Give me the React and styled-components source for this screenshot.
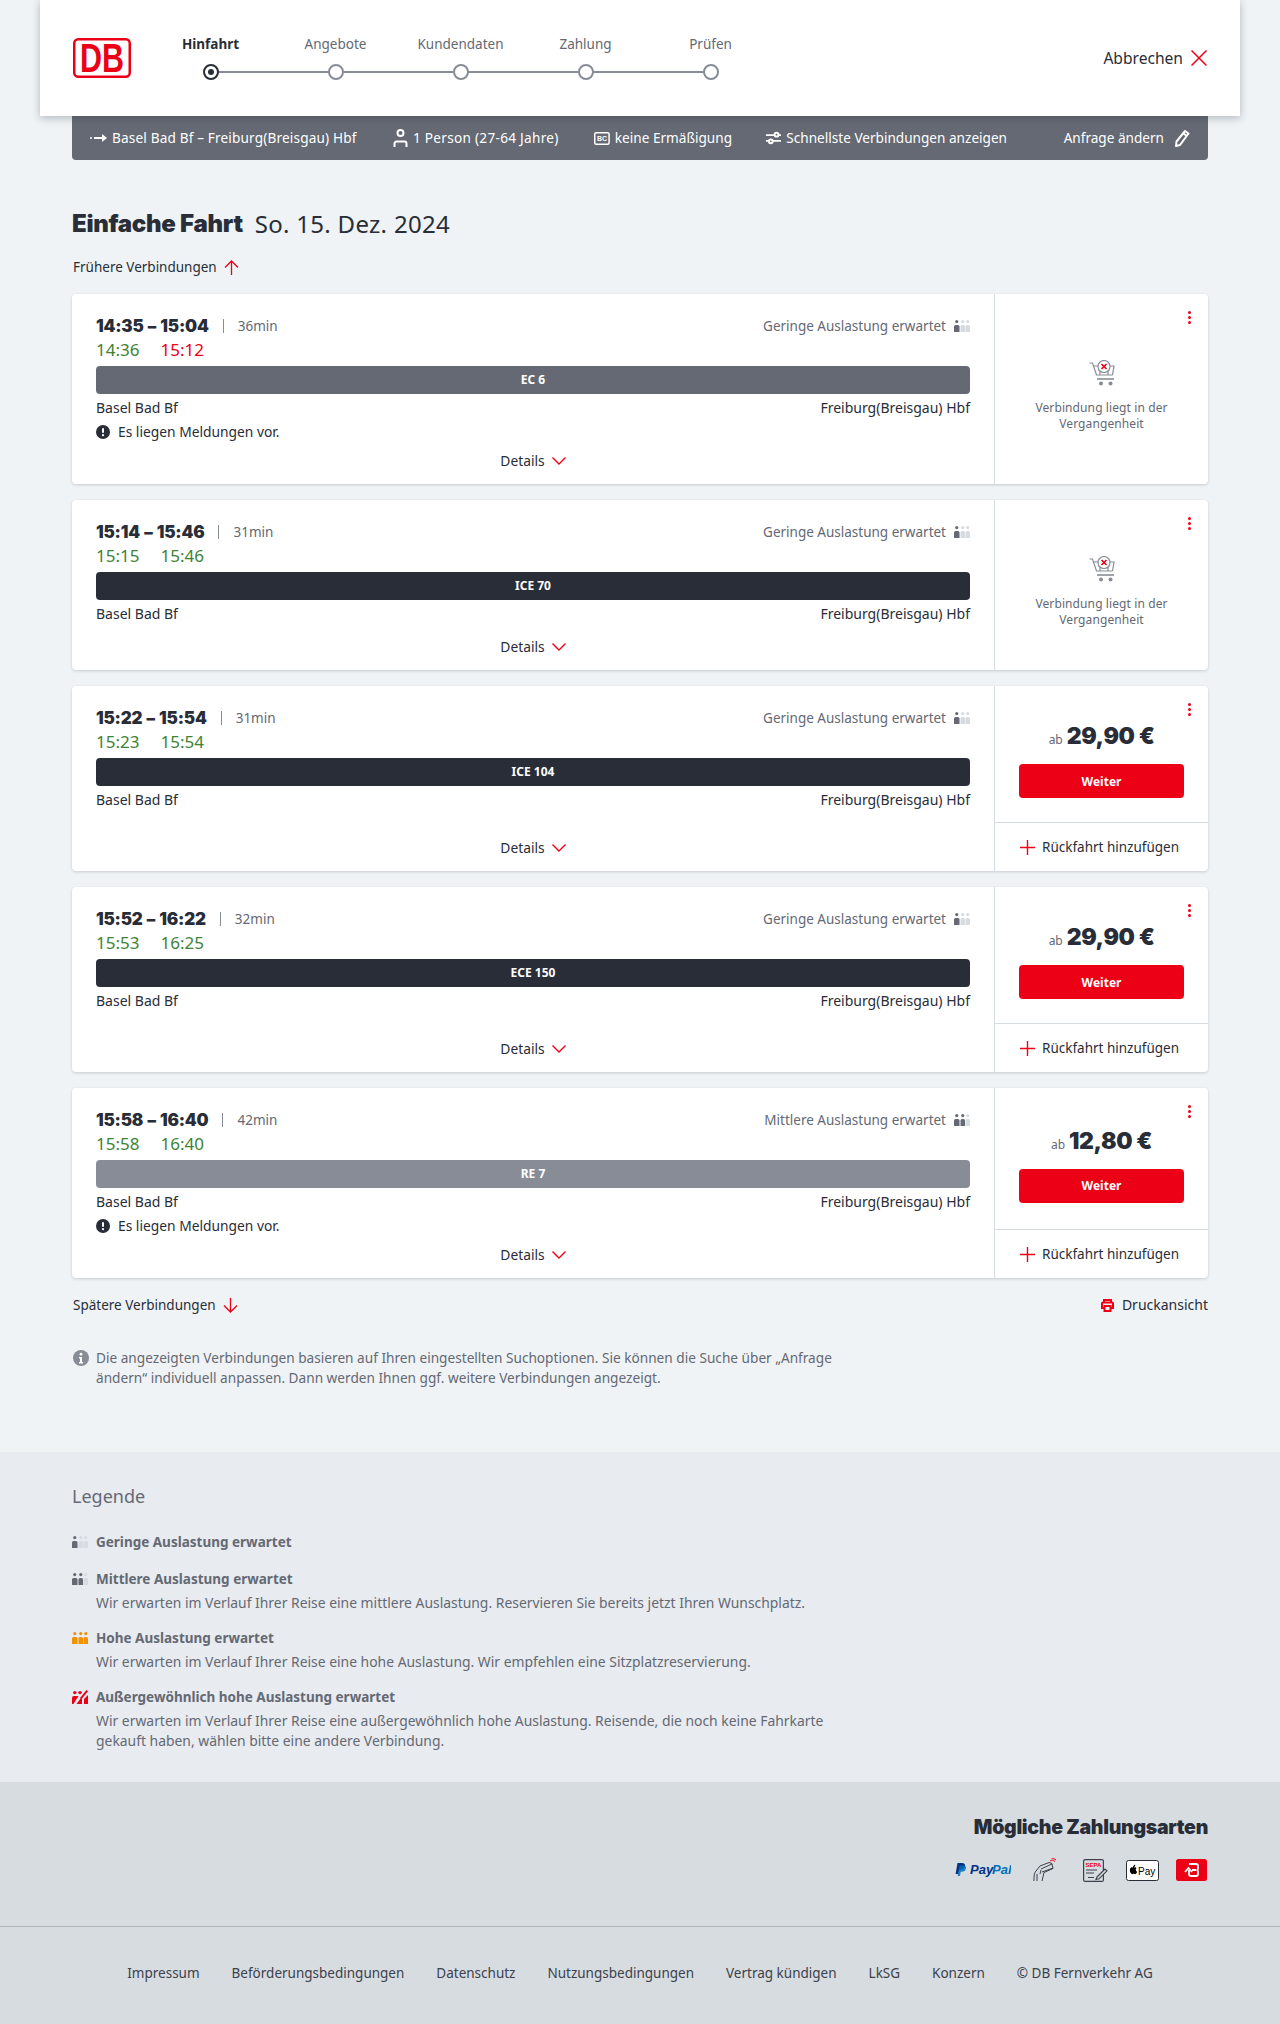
import React from "react";
import styled, { createGlobalStyle } from "styled-components";

const BODY_FONT = `"Noto Sans", "Open Sans", Arial, sans-serif`;
const HEAD_FONT = `Inter, "Noto Sans", Arial, sans-serif`;

const GlobalStyle = createGlobalStyle`
  * { box-sizing: border-box; }
  html, body { margin: 0; padding: 0; }
  body {
    background: #eff3f6;
    color: #282d37;
    font-family: ${BODY_FONT};
    font-size: 14px;
    line-height: 24px;
  }
`;

const Page = styled.div`
  width: 1280px;
  min-height: 2024px;
  display: flex;
  flex-direction: column;
`;

const Header = styled.header`
  position: relative;
  z-index: 2;
  margin: 0 40px;
  height: 116px;
  padding: 0 33px;
  background: #fff;
  box-shadow: 0 2px 8px rgba(40, 45, 55, 0.3);
  display: flex;
  align-items: center;
`;

const LogoBox = styled.svg`
  width: 58px;
  height: 40px;
  flex: none;
  overflow: visible;
`;

const Steps = styled.ol`
  list-style: none;
  margin: 32px 0 0 17px;
  padding: 0;
  display: flex;
  align-self: flex-start;
`;

const Step = styled.li`
  position: relative;
  width: 125px;
  display: flex;
  flex-direction: column;
  align-items: center;
  gap: 8px;
  font-size: 13.5px;
  color: ${p => (p.$active ? "#282d37" : "#646973")};
  font-weight: ${p => (p.$active ? 700 : 400)};
  &:not(:last-child)::after {
    content: "";
    position: absolute;
    left: 50%;
    width: 100%;
    bottom: 7px;
    height: 2px;
    background: #878c96;
  }
`;

const StepDot = styled.span`
  position: relative;
  z-index: 1;
  width: 16px;
  height: 16px;
  border-radius: 50%;
  background: #fff;
  border: 2px solid ${p => (p.$active ? "#282d37" : "#878c96")};
  display: flex;
  align-items: center;
  justify-content: center;
  &::before {
    content: "";
    width: 6px;
    height: 6px;
    border-radius: 50%;
    background: ${p => (p.$active ? "#282d37" : "transparent")};
  }
`;

const Cancel = styled.div`
  margin-left: auto;
  display: flex;
  align-items: center;
  gap: 8px;
  font-size: 15.6px;
`;

const SearchBar = styled.div`
  margin: 0 72px;
  height: 44px;
  padding: 0 18px;
  background: #646973;
  border-radius: 0 0 4px 4px;
  color: #fff;
  display: flex;
  align-items: center;
  font-size: 13.6px;
  gap: 34px;
`;

const BarItem = styled.span`
  width: ${p => p.$width}px;
  letter-spacing: ${p => p.$spacing || 0}px;
  display: flex;
  align-items: center;
  gap: 5px;
  white-space: nowrap;
`;

const BarEdit = styled.span`
  margin-left: auto;
  display: flex;
  align-items: center;
  gap: 10px;
  white-space: nowrap;
`;

const Main = styled.main`
  padding: 0 72px;
  display: flex;
  flex-direction: column;
`;

const Title = styled.h1`
  margin: 48px 0 0;
  font-size: 24px;
  line-height: 32px;
  font-weight: 400;
  letter-spacing: 0.3px;
  display: flex;
  gap: 12px;
`;

const TitleStrong = styled.strong`
  font-family: ${HEAD_FONT};
  font-weight: 900;
  letter-spacing: -0.3px;
`;

const MoreLink = styled.a`
  padding-left: 1px;
  display: flex;
  align-items: center;
  gap: 7px;
  font-size: 13.5px;
  color: #282d37;
`;

const EarlierRow = styled.div`
  margin: 15px 0;
`;

const CardList = styled.div`
  display: flex;
  flex-direction: column;
  gap: 16px;
`;

const Card = styled.article`
  position: relative;
  min-height: ${p => p.$height}px;
  display: grid;
  grid-template-columns: 923px 213px;
  background: #fff;
  border-radius: 4px;
  box-shadow: 0 1px 3px rgba(40, 45, 55, 0.2);
`;

const Left = styled.div`
  padding: 20px 24px 0;
  border-right: 1px solid #d7dce1;
  display: flex;
  flex-direction: column;
`;

const TimeRow = styled.div`
  display: flex;
  align-items: center;
  justify-content: space-between;
`;

const Planned = styled.div`
  display: flex;
  align-items: center;
`;

const PlannedTime = styled.span`
  font-family: ${HEAD_FONT};
  font-weight: 900;
  font-size: 17px;
  letter-spacing: -0.2px;
  word-spacing: 1px;
`;

const Duration = styled.span`
  margin-left: 14px;
  padding-left: 14px;
  border-left: 1px solid #878c96;
  line-height: 14px;
  color: #646973;
  font-size: 13.5px;
`;

const Load = styled.span`
  display: flex;
  align-items: center;
  gap: 8px;
  font-size: 13.5px;
  color: #646973;
`;

const Actual = styled.div`
  display: flex;
  gap: 21px;
  font-size: 17px;
`;

const ActualTime = styled.span`
  color: ${p => (p.$late ? "#ec0016" : "#408335")};
`;

const TrainBar = styled.div`
  margin-top: 4px;
  height: 28px;
  border-radius: 4px;
  background: ${p => p.$color};
  color: #fff;
  font-size: 12px;
  font-weight: 700;
  display: flex;
  align-items: center;
  justify-content: center;
`;

const Stations = styled.div`
  margin-top: 2px;
  display: flex;
  justify-content: space-between;
`;

const Notice = styled.div`
  display: flex;
  align-items: center;
  gap: 8px;
  font-size: 13.8px;
`;

const DetailsRow = styled.div`
  margin-top: auto;
  margin-bottom: 11px;
  display: flex;
  justify-content: center;
  align-items: center;
  gap: 7px;
  font-size: 13.8px;
`;

const Right = styled.div`
  display: flex;
  flex-direction: column;
`;

const Kebab = styled.span`
  position: absolute;
  top: 17px;
  right: 17px;
  width: 3px;
  height: 13px;
  display: flex;
  flex-direction: column;
  justify-content: space-between;
  i {
    display: block;
    width: 3px;
    height: 3px;
    border-radius: 50%;
    background: #ec0016;
  }
`;

const Past = styled.div`
  flex: 1;
  padding: 13px 26px 0;
  display: flex;
  flex-direction: column;
  align-items: center;
  justify-content: center;
  gap: 14px;
  color: #646973;
  font-size: 12px;
  line-height: 16px;
  letter-spacing: 0.1px;
  text-align: center;
`;

const Offer = styled.div`
  flex: 1;
  padding: 0 24px;
  display: flex;
  flex-direction: column;
  align-items: stretch;
  justify-content: center;
`;

const PriceRow = styled.div`
  height: 54px;
  display: flex;
  align-items: baseline;
  justify-content: center;
  gap: 4px;
  padding-top: 11px;
`;

const PriceFrom = styled.span`
  font-size: 12px;
  color: #646973;
`;

const Price = styled.span`
  font-family: ${HEAD_FONT};
  font-weight: 900;
  font-size: 23px;
  line-height: 30px;
  letter-spacing: -0.4px;
`;

const Continue = styled.button`
  height: 34px;
  border: 0;
  border-radius: 4px;
  background: #ec0016;
  color: #fff;
  font-family: ${BODY_FONT};
  font-size: 12px;
  font-weight: 700;
`;

const AddReturn = styled.div`
  height: 49px;
  padding-left: 25px;
  border-top: 1px solid #d7dce1;
  display: flex;
  align-items: center;
  gap: 7px;
  font-size: 13.5px;
`;

const BelowRow = styled.div`
  margin-top: 15px;
  display: flex;
  justify-content: space-between;
`;

const PrintLink = styled.span`
  display: flex;
  align-items: center;
  gap: 8px;
`;

const Info = styled.p`
  margin: 31px 0 0;
  width: 772px;
  display: flex;
  gap: 7px;
  padding-left: 1px;
  color: #646973;
  font-size: 13.65px;
  line-height: 20px;
  svg { flex: none; margin-top: 2px; }
`;

const Legend = styled.section`
  margin-top: 64px;
  height: 330px;
  padding: 32px 72px 0;
  background: #e8ebf0;
  color: #646973;
`;

const LegendTitle = styled.h2`
  margin: 0 0 22px;
  font-size: 18px;
  line-height: 24px;
  font-weight: 400;
`;

const LegendItem = styled.div`
  margin-bottom: 13px;
  width: 780px;
  display: grid;
  grid-template-columns: 24px 1fr;
  align-items: center;
`;

const LegendName = styled.strong`
  font-size: 13.5px;
  font-weight: 700;
`;

const LegendText = styled.p`
  grid-column: 2;
  margin: 2px 0 0;
  font-size: 13.9px;
  line-height: 20px;
`;

const Footer = styled.footer`
  flex: 1;
  background: #d7dce1;
  display: flex;
  flex-direction: column;
`;

const Payments = styled.div`
  height: 145px;
  padding: 30px 72px 0;
  border-bottom: 1px solid #afb4bb;
  display: flex;
  flex-direction: column;
  align-items: flex-end;
`;

const PaymentsTitle = styled.h3`
  margin: 0;
  font-family: ${HEAD_FONT};
  font-weight: 900;
  font-size: 19.5px;
  line-height: 30px;
  letter-spacing: -0.3px;
`;

const PaymentIcons = styled.div`
  margin-top: 16px;
  padding-right: 1px;
  display: flex;
  align-items: center;
`;

const PayItem = styled.span`
  display: flex;
  margin-right: ${p => p.$gap || 0}px;
`;

const FooterNav = styled.nav`
  flex: 1;
  padding-bottom: 6px;
  display: flex;
  align-items: center;
  justify-content: center;
  gap: 32px;
  font-size: 13.5px;
  color: #3c414b;
`;

const Logo = () => (
  <LogoBox viewBox="0 0 58 40">
    <rect x="1.25" y="1.25" width="55.5" height="37.5" rx="4" fill="#fff" stroke="#ec0016" strokeWidth="2.5" />
    <text x="29" y="34" textAnchor="middle" textLength="44" lengthAdjust="spacingAndGlyphs"
      fontFamily="Liberation Sans" fontWeight="700" fontSize="40" fill="#ec0016">DB</text>
  </LogoBox>
);

const RED = "#ec0016";

const ArrowUpIcon = () => (
  <svg width="15" height="15" viewBox="0 0 15 15" fill="none" stroke={RED} strokeWidth="1.3">
    <path d="M7.500 15V1M1 7.500l6.500-6.500 6.500 6.500" />
  </svg>
);

const ArrowDownIcon = () => (
  <svg width="15" height="15" viewBox="0 0 15 15" fill="none" stroke={RED} strokeWidth="1.3">
    <path d="M7.500 0v14M1 7.500l6.500 6.500 6.500-6.500" />
  </svg>
);

const CloseIcon = () => (
  <svg width="16" height="16" viewBox="0 0 16 16" fill="none" stroke={RED} strokeWidth="1.500">
    <path d="M.5.500l15 15M15.500.500l-15 15" />
  </svg>
);

const ChevronIcon = () => (
  <svg width="14" height="8" viewBox="0 0 14 8" fill="none" stroke={RED} strokeWidth="1.400">
    <path d="M.5.500L7 7l6.500-6.500" />
  </svg>
);

const PlusIcon = () => (
  <svg width="15" height="15" viewBox="0 0 15 15" fill="none" stroke={RED} strokeWidth="1.400">
    <path d="M7.500 0v15M0 7.500h15" />
  </svg>
);

const Occupancy = ({ level = 1, color = "#646973", size = 16 }) => (
  <svg width={size} height={size * 0.75} viewBox="0 0 16 12" style={{ flex: "none" }}>
    {[0, 1, 2].map(i => {
      const x = i === 0 ? 0 : i === 1 ? 6.5 : 11.5;
      const w = i === 0 ? 5.5 : 4.5;
      const fill = i < level ? color : "#d7dce1";
      return (
        <g key={i} fill={fill}>
          <circle cx={x + w / 2} cy="1.6" r="1.6" />
          <path d={`M${x} 12V6.5a1.5 1.5 0 0 1 1.5-1.5h${w - 3}a1.5 1.5 0 0 1 1.5 1.5V12z`} />
        </g>
      );
    })}
  </svg>
);

const OccupancyFull = () => (
  <svg width="16" height="14" viewBox="0 0 16 14" style={{ flex: "none" }}>
    <g fill="#ec0016">
      <circle cx="2.8" cy="2.6" r="1.7" />
      <circle cx="8" cy="2.6" r="1.7" />
      <path d="M0 14V8a2 2 0 0 1 2-2h4.500L1.500 14z" />
      <path d="M4.500 14l5.500-7.500V14z" />
      <path d="M12 14V9l4-4v9z" />
      <path d="M8 8L14.500 0l1.500 1.200L9.500 9.200z" />
    </g>
  </svg>
);

const RouteIcon = () => (
  <svg width="17" height="10" viewBox="0 0 17 10" fill="#fff">
    <circle cx="1" cy="5" r="1" />
    <rect x="4" y="4" width="9" height="2" />
    <path d="M12 1l5 4-5 4z" />
  </svg>
);

const PersonIcon = () => (
  <svg width="15" height="20" viewBox="0 0 15 20" fill="none" stroke="#fff" strokeWidth="2">
    <circle cx="7.500" cy="5" r="3" />
    <path d="M1.500 19v-3.500a2 2 0 0 1 2-2h8a2 2 0 0 1 2 2V19" />
  </svg>
);

const CardIcon = () => (
  <svg width="16" height="13" viewBox="0 0 16 13">
    <rect x="0.75" y="0.75" width="14.5" height="11.5" rx="1.5" fill="none" stroke="#fff" strokeWidth="1.5" />
    <text x="8" y="9.200" textAnchor="middle" fontFamily="Liberation Sans" fontWeight="700" fontSize="7" fill="#fff">BC</text>
  </svg>
);

const FilterIcon = () => (
  <svg width="16" height="14" viewBox="0 0 16 14" fill="none" stroke="#fff" strokeWidth="2">
    <path d="M0 4h16M0 10h16" />
    <circle cx="11" cy="3.5" r="2" fill="#646973" />
    <circle cx="5" cy="10.5" r="2" fill="#646973" />
  </svg>
);

const PencilIcon = () => (
  <svg width="16" height="18" viewBox="0 0 16 18" fill="none" stroke="#fff" strokeWidth="2" strokeLinejoin="round">
    <path d="M11 2l3.500 2.500L6 16l-4 1 .5-4.500z" />
    <path d="M9.500 4.500L13 7" />
  </svg>
);

const AlertIcon = () => (
  <svg width="14" height="14" viewBox="0 0 14 14" style={{ flex: "none" }}>
    <circle cx="7" cy="7" r="7" fill="#282d37" />
    <rect x="6" y="3" width="2" height="5" rx="1" fill="#fff" />
    <circle cx="7" cy="10.2" r="1.1" fill="#fff" />
  </svg>
);

const InfoIcon = () => (
  <svg width="16" height="16" viewBox="0 0 16 16">
    <circle cx="8" cy="8" r="8" fill="#878c96" />
    <circle cx="8" cy="4.2" r="1.4" fill="#fff" />
    <path d="M6 7h3v5h1v1.400H6V12h1V8.400H6z" fill="#fff" />
  </svg>
);

const CartIcon = () => (
  <svg width="26" height="26" viewBox="0 0 26 26" fill="none" stroke="#878c96" strokeWidth="1.2">
    <path d="M0.5 3h3l4 12h16" />
    <path d="M4.5 6h20.5l-1.5 9" />
    <path d="M8 19h17" strokeWidth="1.6" />
    <path d="M9 10h12M11 6v9M19 6v9" />
    <circle cx="12" cy="23.5" r="2" fill="#878c96" stroke="none" />
    <circle cx="21.5" cy="23.5" r="2" fill="#878c96" stroke="none" />
    <circle cx="15" cy="6.5" r="6" fill="#fff" />
    <path d="M12.500 4l5 5M17.500 4l-5 5" stroke="#ec0016" strokeWidth="1.6" />
  </svg>
);

const PrintIcon = () => (
  <svg width="13" height="13" viewBox="0 0 13 13" fill="none" stroke={RED} strokeWidth="2">
    <path d="M3 3.500V1h7v2.500" />
    <path d="M3 9H1V4.500a1 1 0 0 1 1-1h9a1 1 0 0 1 1 1V9h-2" />
    <rect x="3.500" y="7" width="6" height="5" />
  </svg>
);

const PayPal = () => (
  <svg width="56" height="16" viewBox="0 0 56 16">
    <path d="M2.500 1h4.500c2.400 0 3.400 1.300 3 3.300-.5 2.300-2 3.500-4.300 3.500H4.200L3.400 12H.6z" fill="#003087" />
    <path d="M4.500 3.500h3.900c2 0 2.900 1.100 2.500 3-.5 2.200-1.900 3.300-4 3.300H5.700L5 14H2.700z" fill="#0070ba" opacity="0.85" />
    <text x="15" y="12" fontFamily="Liberation Sans" fontWeight="700" fontStyle="italic" fontSize="13" fill="#003087">Pay</text>
    <text x="37" y="12" fontFamily="Liberation Sans" fontWeight="700" fontStyle="italic" fontSize="13" fill="#0070ba">Pal</text>
  </svg>
);

const CardHand = () => (
  <svg width="24" height="24" viewBox="0 0 24 24" fill="none" stroke="#3c414b" strokeWidth="1">
    <path d="M1 23c0-5 0-8 2-10l4-5 9-3.500 3 1 1 5-9 4-2 8.500" />
    <path d="M8 11l11-5M9 14l11-4" />
    <path d="M4 23v-7M7 16l1-4" />
    <path d="M17 3c1.500-1 3.500-1 5 .5M18.500.8c1.500-.4 3.500 0 4.500 1.200" stroke="#ec0016" />
  </svg>
);

const Sepa = () => (
  <svg width="25" height="23" viewBox="0 0 25 23" fill="none" stroke="#3c414b">
    <rect x="0.600" y="0.600" width="19.800" height="21.800" rx="1.500" strokeWidth="1.200" />
    <text x="10.500" y="7.500" textAnchor="middle" fontFamily="Liberation Sans" fontWeight="700" fontSize="6" fill="#ec0016" stroke="none">SEPA</text>
    <path d="M3 11h11M3 14h8M5 18.500h6" />
    <path d="M14 18l8-8 2 1.800-8 8-3 .7z" fill="#d7dce1" strokeWidth="1.200" />
  </svg>
);

const ApplePay = () => (
  <svg width="33" height="21" viewBox="0 0 33 21">
    <rect x="0.500" y="0.500" width="32" height="20" rx="2" fill="#fff" stroke="#282d37" />
    <path d="M8.500 6.800c.6-.7.900-1.300.8-2-.7 0-1.400.5-1.800 1-.4.500-.7 1.200-.6 1.900.7 0 1.300-.4 1.600-.9zm1.300 2.700c0-1 .8-1.500.9-1.500-.5-.7-1.200-.8-1.500-.8-.6 0-1.200.4-1.600.4-.4 0-.9-.4-1.500-.4-.8 0-1.500.5-1.900 1.200-.8 1.400-.2 3.500.6 4.700.4.500.8 1.200 1.400 1.100.6 0 .8-.4 1.500-.4.700 0 .9.400 1.500.4.600 0 1-.5 1.400-1.100.4-.6.600-1.200.6-1.300-.1 0-1.400-.5-1.400-2.300z" fill="#000" />
    <text x="12" y="14.500" fontFamily="Liberation Sans" fontSize="10" fill="#000">Pay</text>
  </svg>
);

const Bonus = () => (
  <svg width="31" height="22" viewBox="0 0 31 22">
    <rect width="31" height="22" rx="2.500" fill="#ec0016" />
    <path d="M13 5h7a2 2 0 0 1 2 2v2.500a1.500 1.500 0 0 1-1.500 1.500 1.500 1.500 0 0 1 1.500 1.500V15a2 2 0 0 1-2 2h-5a2 2 0 0 1-2-2v-4M9 13l3.500-4 3.500 4M16 11h4" fill="none" stroke="#fff" strokeWidth="1.800" />
  </svg>
);

const Details = () => (
  <DetailsRow>
    Details
    <ChevronIcon />
  </DetailsRow>
);

const connections = [
  { height: 190, dep: "14:35", arr: "15:04", min: "36min", realDep: "14:36", realArr: "15:12", late: true, train: "EC 6", color: "#646973", origin: "Basel Bad Bf", notice: true, past: true },
  { height: 170, dep: "15:14", arr: "15:46", min: "31min", realDep: "15:15", realArr: "15:46", train: "ICE 70", color: "#282d37", origin: "Basel Bad Bf", past: true },
  { height: 185, dep: "15:22", arr: "15:54", min: "31min", realDep: "15:23", realArr: "15:54", train: "ICE 104", color: "#282d37", origin: "Basel Bad Bf", price: "29,90 €" },
  { height: 185, dep: "15:52", arr: "16:22", min: "32min", realDep: "15:53", realArr: "16:25", train: "ECE 150", color: "#282d37", origin: "Basel Bad Bf", price: "29,90 €" },
  { height: 190, dep: "15:58", arr: "16:40", min: "42min", realDep: "15:58", realArr: "16:40", train: "RE 7", color: "#878c96", origin: "Basel Bad Bf", notice: true, price: "12,80 €", load: 2 },
];

const legendItems = [
  { name: "Geringe Auslastung erwartet", icon: <Occupancy level={1} /> },
  { name: "Mittlere Auslastung erwartet", icon: <Occupancy level={2} />, text: "Wir erwarten im Verlauf Ihrer Reise eine mittlere Auslastung. Reservieren Sie bereits jetzt Ihren Wunschplatz." },
  { name: "Hohe Auslastung erwartet", icon: <Occupancy level={3} color="#f39200" />, text: "Wir erwarten im Verlauf Ihrer Reise eine hohe Auslastung. Wir empfehlen eine Sitzplatzreservierung." },
  { name: "Außergewöhnlich hohe Auslastung erwartet", icon: <OccupancyFull />, text: "Wir erwarten im Verlauf Ihrer Reise eine außergewöhnlich hohe Auslastung. Reisende, die noch keine Fahrkarte gekauft haben, wählen bitte eine andere Verbindung." },
];

const footerLinks = ["Impressum", "Beförderungsbedingungen", "Datenschutz", "Nutzungsbedingungen", "Vertrag kündigen", "LkSG", "Konzern", "© DB Fernverkehr AG"];

const steps = ["Hinfahrt", "Angebote", "Kundendaten", "Zahlung", "Prüfen"];

const ConnectionCard = ({ item }) => (
  <Card $height={item.height}>
    <Left>
      <TimeRow>
        <Planned>
          <PlannedTime>{item.dep} – {item.arr}</PlannedTime>
          <Duration>{item.min}</Duration>
        </Planned>
        <Load>
          {item.load === 2 ? "Mittlere" : "Geringe"} Auslastung erwartet
          <Occupancy level={item.load || 1} />
        </Load>
      </TimeRow>
      <Actual>
        <ActualTime>{item.realDep}</ActualTime>
        <ActualTime $late={item.late}>{item.realArr}</ActualTime>
      </Actual>
      <TrainBar $color={item.color}>{item.train}</TrainBar>
      <Stations>
        <span>{item.origin}</span>
        <span>Freiburg(Breisgau) Hbf</span>
      </Stations>
      {item.notice && (
        <Notice>
          <AlertIcon />
          Es liegen Meldungen vor.
        </Notice>
      )}
      <Details />
    </Left>
    <Right>
      <Kebab><i /><i /><i /></Kebab>
      {item.past ? (
        <Past>
          <CartIcon />
          <span>Verbindung liegt in der Vergangenheit</span>
        </Past>
      ) : (
        <>
          <Offer>
            <PriceRow>
              <PriceFrom>ab</PriceFrom>
              <Price>{item.price}</Price>
            </PriceRow>
            <Continue>Weiter</Continue>
          </Offer>
          <AddReturn>
            <PlusIcon />
            Rückfahrt hinzufügen
          </AddReturn>
        </>
      )}
    </Right>
  </Card>
);

export default function App() {
  return (
    <Page>
      <GlobalStyle />
      <Header>
        <Logo />
        <Steps>
          {steps.map((s, i) => (
            <Step key={s} $active={i === 0}>
              {s}
              <StepDot $active={i === 0} />
            </Step>
          ))}
        </Steps>
        <Cancel>
          Abbrechen
          <CloseIcon />
        </Cancel>
      </Header>
      <SearchBar>
        <BarItem $width={269} $spacing={0.16}><RouteIcon />Basel Bad Bf – Freiburg(Breisgau) Hbf</BarItem>
        <BarItem $width={167} $spacing={0.28}><PersonIcon />1 Person (27-64 Jahre)</BarItem>
        <BarItem $width={138}><CardIcon />keine Ermäßigung</BarItem>
        <BarItem $width={241}><FilterIcon />Schnellste Verbindungen anzeigen</BarItem>
        <BarEdit>Anfrage ändern<PencilIcon /></BarEdit>
      </SearchBar>
      <Main>
        <Title>
          <TitleStrong>Einfache Fahrt</TitleStrong>
          <span>So. 15. Dez. 2024</span>
        </Title>
        <EarlierRow>
          <MoreLink>Frühere Verbindungen <ArrowUpIcon /></MoreLink>
        </EarlierRow>
        <CardList>
          {connections.map(c => <ConnectionCard key={c.dep} item={c} />)}
        </CardList>
        <BelowRow>
          <MoreLink>Spätere Verbindungen <ArrowDownIcon /></MoreLink>
          <PrintLink><PrintIcon />Druckansicht</PrintLink>
        </BelowRow>
        <Info>
          <InfoIcon />
          <span>Die angezeigten Verbindungen basieren auf Ihren eingestellten Suchoptionen. Sie können die Suche über „Anfrage ändern“ individuell anpassen. Dann werden Ihnen ggf. weitere Verbindungen angezeigt.</span>
        </Info>
      </Main>
      <Legend>
        <LegendTitle>Legende</LegendTitle>
        {legendItems.map(l => (
          <LegendItem key={l.name}>
            {l.icon}
            <LegendName>{l.name}</LegendName>
            {l.text && <LegendText>{l.text}</LegendText>}
          </LegendItem>
        ))}
      </Legend>
      <Footer>
        <Payments>
          <PaymentsTitle>Mögliche Zahlungsarten</PaymentsTitle>
          <PaymentIcons>
            <PayItem $gap={22}><PayPal /></PayItem>
            <PayItem $gap={26}><CardHand /></PayItem>
            <PayItem $gap={18}><Sepa /></PayItem>
            <PayItem $gap={17}><ApplePay /></PayItem>
            <PayItem><Bonus /></PayItem>
          </PaymentIcons>
        </Payments>
        <FooterNav>
          {footerLinks.map(f => <span key={f}>{f}</span>)}
        </FooterNav>
      </Footer>
    </Page>
  );
}
